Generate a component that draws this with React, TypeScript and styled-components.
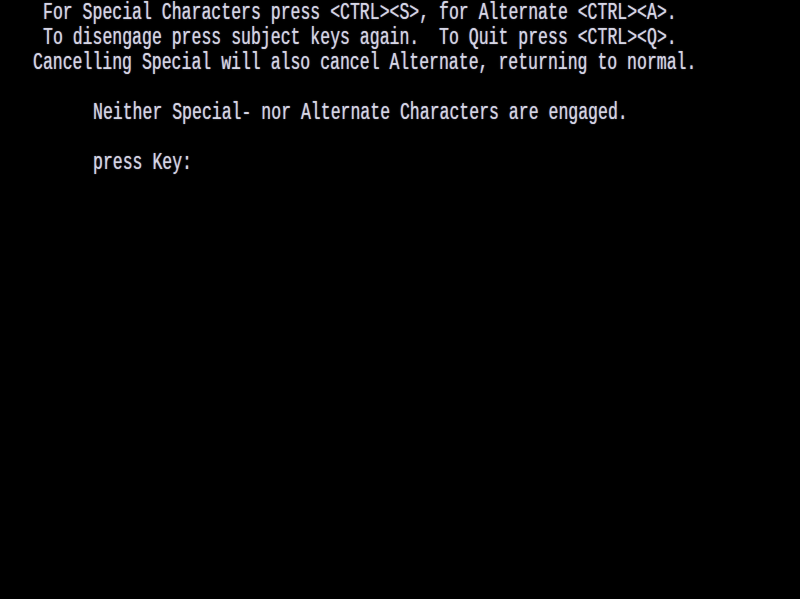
import React from "react";
import styled, { createGlobalStyle } from "styled-components";

const Global = createGlobalStyle`
  html, body {
    margin: 0;
    padding: 0;
    background: #000;
  }
  #root {
    min-height: 599px;
    background: #000;
  }
`;

const Screen = styled.div`
  width: 800px;
  height: 599px;
  overflow: hidden;
  background: #000;
  padding: 2px 0 0 33px;
  box-sizing: border-box;
  display: flex;
  flex-direction: column;
`;

const Line = styled.div<{ $indent?: number }>`
  height: 25px;
  padding-left: ${(p) => (p.$indent ?? 0) * 10}px;
  display: flex;
  align-items: flex-start;
`;

const Text = styled.span`
  display: inline-block;
  font-family: "Liberation Mono", "DejaVu Sans Mono", monospace;
  font-size: 16.5px;
  line-height: 16px;
  white-space: pre;
  color: #d6d6e6;
  text-shadow: 0 0 1px rgba(214, 214, 230, 0.7);
  transform: scaleY(1.4);
  transform-origin: 0 0;
`;

const lines: { indent: number; text: string }[] = [
  { indent: 1, text: "For Special Characters press <CTRL><S>, for Alternate <CTRL><A>." },
  { indent: 1, text: "To disengage press subject keys again.  To Quit press <CTRL><Q>." },
  { indent: 0, text: "Cancelling Special will also cancel Alternate, returning to normal." },
  { indent: 0, text: "" },
  { indent: 6, text: "Neither Special- nor Alternate Characters are engaged." },
  { indent: 0, text: "" },
  { indent: 6, text: "press Key:" },
];

export default function App() {
  return (
    <>
      <Global />
      <Screen>
        {lines.map((l, i) => (
          <Line key={i} $indent={l.indent}>
            <Text>{l.text}</Text>
          </Line>
        ))}
      </Screen>
    </>
  );
}
